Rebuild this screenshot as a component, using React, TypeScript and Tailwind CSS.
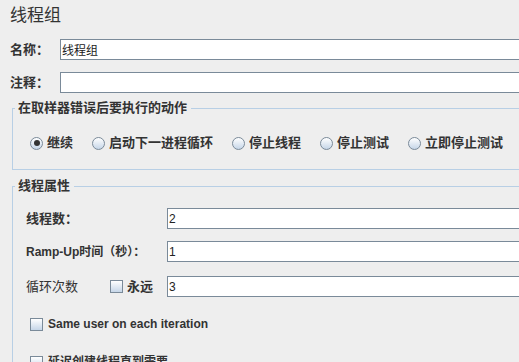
import React from "react";

// ─── Helpers ──────────────────────────────────────────────────────────────────

const font = "font-['Liberation_Sans','Noto_Sans_CJK_SC',sans-serif]";
const field =
  "h-[21px] flex-1 border border-[#7a8a99] bg-white pl-[1px] text-[12px] text-[#222] outline-none";

function Radio({ label, checked }: { label: string; checked?: boolean }) {
  return (
    <label className="flex items-center gap-[4px]">
      <span className="flex h-[13px] w-[13px] items-center justify-center rounded-full border border-[#7a8a99] bg-gradient-to-b from-white to-[#c6d6e8]">
        {checked && <span className="h-[6px] w-[6px] rounded-full bg-[#333]" />}
      </span>
      <span className="text-[13px] font-bold leading-[16px] text-[#333]">{label}</span>
    </label>
  );
}

function Check({ label, bold = true }: { label: string; bold?: boolean }) {
  return (
    <label className="flex items-center gap-[5px]">
      <span className="h-[13px] w-[13px] border border-[#7a8a99] bg-gradient-to-b from-white to-[#c6d6e8]" />
      <span className={`text-[12px] leading-[16px] text-[#333] ${bold ? "font-bold" : ""}`}>{label}</span>
    </label>
  );
}

function Group({ title, children, className }: { title: string; children: React.ReactNode; className?: string }) {
  return (
    <fieldset className={`ml-[12px] border border-[#b8cfe5] ${className ?? ""}`}>
      <legend className="ml-[2px] pl-[3px] pr-[4px] text-[13px] font-bold leading-[16px] text-[#333]">
        {title}
      </legend>
      {children}
    </fieldset>
  );
}

// ─── Page ─────────────────────────────────────────────────────────────────────

export default function App() {
  return (
    <div className={`h-[362px] w-[519px] overflow-hidden bg-[#eeeeee] ${font}`}>
      <div className="w-[540px]">
        <div className="pl-[10px] pt-[5px] text-[17px] leading-[22px] text-[#333]">线程组</div>

        <div className="mt-[12px] flex h-[21px] items-center">
          <span className="w-[60px] shrink-0 pl-[10px] text-[13px] font-bold text-[#333]">名称：</span>
          <input className={field} defaultValue="线程组" readOnly />
        </div>
        <div className="mt-[12px] flex h-[21px] items-center">
          <span className="w-[60px] shrink-0 pl-[10px] text-[13px] font-bold text-[#333]">注释：</span>
          <input className={field} defaultValue="" readOnly />
        </div>

        <Group title="在取样器错误后要执行的动作" className="mt-[7px]">
          <div className="mt-[19px] mb-[18px] flex items-center gap-[19px] pl-[17px]">
            <Radio label="继续" checked />
            <Radio label="启动下一进程循环" />
            <Radio label="停止线程" />
            <Radio label="停止测试" />
            <Radio label="立即停止测试" />
          </div>
        </Group>

        <Group title="线程属性" className="mt-[8px] h-[200px]">
          <div className="mt-[14px] flex h-[21px] items-center">
            <span className="w-[154px] shrink-0 pl-[13px] text-[13px] font-bold text-[#333]">线程数：</span>
            <input className={field} defaultValue="2" readOnly />
          </div>
          <div className="mt-[12px] flex h-[21px] items-center">
            <span className="w-[154px] shrink-0 pl-[13px] text-[12px] font-bold text-[#333]">Ramp-Up时间（秒）：</span>
            <input className={field} defaultValue="1" readOnly />
          </div>
          <div className="mt-[14px] flex h-[21px] items-center">
            <span className="w-[97px] shrink-0 pl-[13px] text-[13px] text-[#333]">循环次数</span>
            <span className="flex w-[57px] shrink-0 items-center gap-[4px]">
              <span className="h-[13px] w-[13px] border border-[#7a8a99] bg-gradient-to-b from-white to-[#c6d6e8]" />
              <span className="text-[13px] font-bold text-[#333]">永远</span>
            </span>
            <input className={field} defaultValue="3" readOnly />
          </div>
          <div className="mt-[19px] pl-[17px]">
            <Check label="Same user on each iteration" />
          </div>
          <div className="mt-[22px] pl-[17px]">
            <Check label="延迟创建线程直到需要" />
          </div>
        </Group>
      </div>
    </div>
  );
}
